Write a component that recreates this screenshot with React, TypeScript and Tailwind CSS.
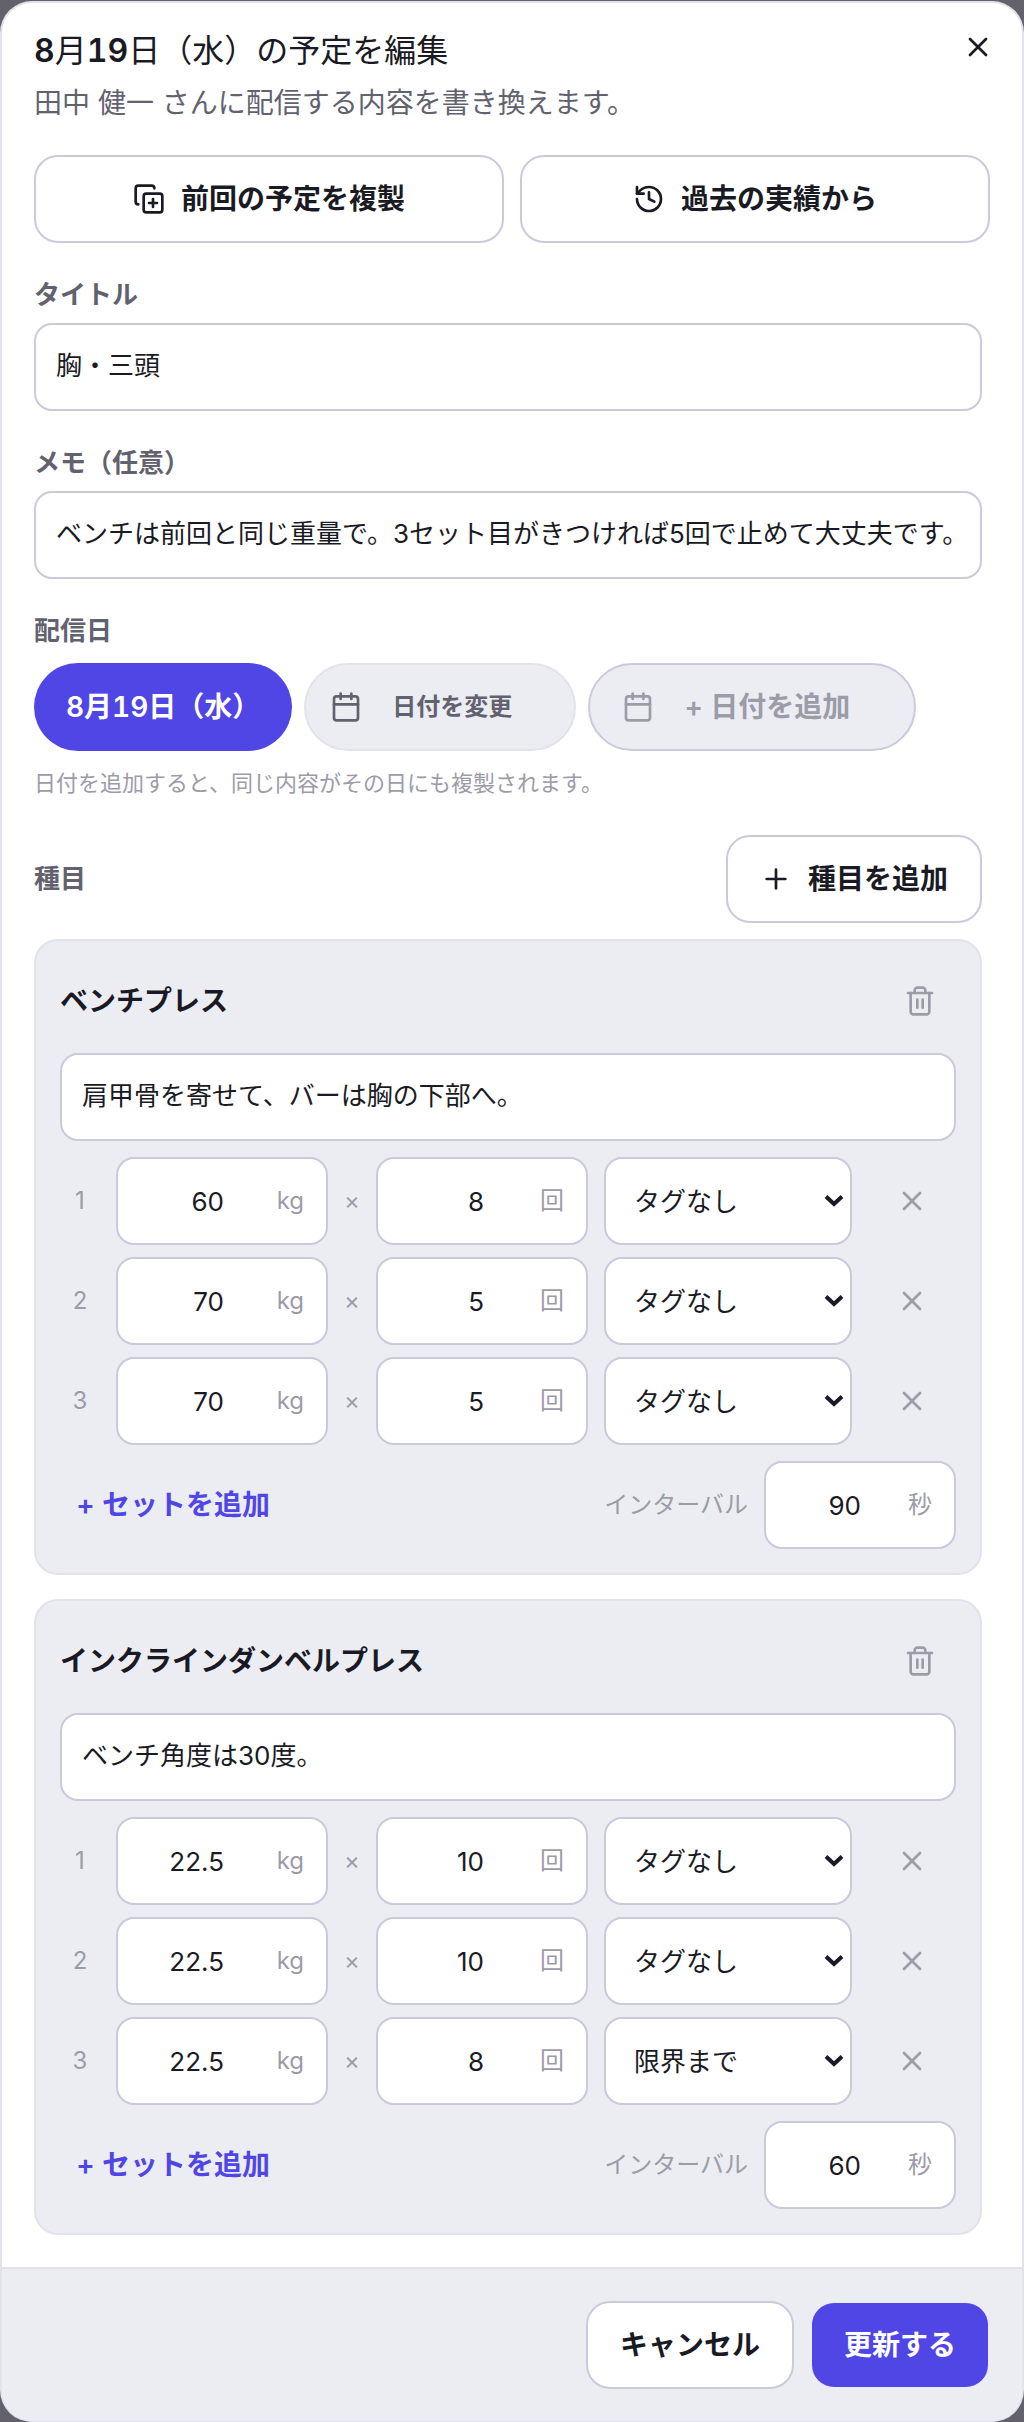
import { useId } from "react";
import { Calendar, CopyPlus, History, Plus, X } from "lucide-react";

type SetRow = { weight: string; reps: string; tag: string };

type Exercise = {
  name: string;
  note: string;
  sets: SetRow[];
  interval: string;
};

const TAGS = ["タグなし", "限界まで"];

const EXERCISES: Exercise[] = [
  {
    name: "ベンチプレス",
    note: "肩甲骨を寄せて、バーは胸の下部へ。",
    sets: [
      { weight: "60", reps: "8", tag: "タグなし" },
      { weight: "70", reps: "5", tag: "タグなし" },
      { weight: "70", reps: "5", tag: "タグなし" },
    ],
    interval: "90",
  },
  {
    name: "インクラインダンベルプレス",
    note: "ベンチ角度は30度。",
    sets: [
      { weight: "22.5", reps: "10", tag: "タグなし" },
      { weight: "22.5", reps: "10", tag: "タグなし" },
      { weight: "22.5", reps: "8", tag: "限界まで" },
    ],
    interval: "60",
  },
];

const inputClass =
  "h-22 w-full min-w-0 rounded-[18px] border-2 border-[#cbc9dc] bg-white text-[26px] text-[#1a1a24] focus:outline-none";

const outlineButton =
  "flex h-22 items-center justify-center gap-4 rounded-3xl border-2 border-[#cbc9dc] bg-white px-8 text-[28px] font-semibold whitespace-nowrap text-[#1a1a24]";

const TrashIcon = () => (
  <svg
    viewBox="0 0 24 24"
    className="size-8"
    fill="none"
    stroke="currentColor"
    strokeWidth="2"
    strokeLinecap="round"
    strokeLinejoin="round"
  >
    <path d="M3 6h18" />
    <path d="M19 6v14c0 1-1 2-2 2H7c-1 0-2-1-2-2V6" />
    <path d="M8 6V4c0-1 1-2 2-2h4c1 0 2 1 2 2v2" />
    <path d="M10 11v6" />
    <path d="M14 11v6" />
  </svg>
);

const TextField = ({ label, value }: { label: string; value: string }) => {
  const id = useId();
  return (
    <div className="flex flex-col gap-2">
      <label
        htmlFor={id}
        className="text-[26px] leading-10 font-semibold text-[#62626f]"
      >
        {label}
      </label>
      <input
        id={id}
        type="text"
        defaultValue={value}
        className={`${inputClass} px-5 pb-2`}
      />
    </div>
  );
};

const UnitInput = ({
  label,
  unit,
  value,
}: {
  label: string;
  unit: string;
  value: string;
}) => (
  <div className="relative">
    <input
      type="text"
      inputMode="decimal"
      aria-label={label}
      defaultValue={value}
      className={`${inputClass} pr-[102px] pl-5 text-right`}
    />
    <span className="pointer-events-none absolute inset-y-0 right-6 flex items-center text-2xl text-[#9c9ba8]">
      {unit}
    </span>
  </div>
);

const TagSelect = ({ value }: { value: string }) => (
  <div className="relative">
    <select
      aria-label="タグ"
      defaultValue={value}
      className={`${inputClass} appearance-none pr-12 pl-7`}
    >
      {TAGS.map((tag) => (
        <option key={tag}>{tag}</option>
      ))}
    </select>
    <span className="pointer-events-none absolute inset-y-0 right-2 flex items-center text-[#1a1a24]">
      <svg
        viewBox="0 0 20 14"
        className="h-[14px] w-5"
        fill="none"
        stroke="currentColor"
        strokeWidth="4"
      >
        <path d="M2 2.5l8 7.5 8-7.5" />
      </svg>
    </span>
  </div>
);

const ExerciseCard = ({ exercise }: { exercise: Exercise }) => {
  const intervalId = useId();
  return (
    <section className="flex flex-col gap-4 rounded-3xl border-2 border-[#e2e2eb] bg-[#ecedf3] p-6">
      <div className="flex h-18 items-center justify-between">
        <h3 className="text-[28px] font-semibold text-[#1a1a24]">
          {exercise.name}
        </h3>
        <button
          type="button"
          aria-label="種目を削除"
          className="flex size-18 items-center justify-center text-[#9c9ba8]"
        >
          <TrashIcon />
        </button>
      </div>
      <input
        type="text"
        aria-label="種目メモ"
        defaultValue={exercise.note}
        className={`${inputClass} px-5 pb-2`}
      />
      <div className="flex flex-col gap-3">
        {exercise.sets.map((set, i) => (
          <div
            key={i}
            className="grid grid-cols-[40px_1fr_16px_1fr_248px_88px] items-center gap-4"
          >
            <span className="text-center text-2xl text-[#9c9ba8]">{i + 1}</span>
            <UnitInput label="重量" unit="kg" value={set.weight} />
            <span className="text-center text-2xl text-[#9c9ba8]">×</span>
            <UnitInput label="回数" unit="回" value={set.reps} />
            <TagSelect value={set.tag} />
            <button
              type="button"
              aria-label="セットを削除"
              className="flex h-22 items-center justify-center text-[#9c9ba8]"
            >
              <X className="size-8" />
            </button>
          </div>
        ))}
      </div>
      <div className="flex items-center justify-between">
        <button
          type="button"
          className="h-22 px-4 text-[28px] font-semibold text-[#4f46e5]"
        >
          + セットを追加
        </button>
        <div className="flex items-center gap-4">
          <label htmlFor={intervalId} className="text-2xl text-[#9c9ba8]">
            インターバル
          </label>
          <div className="relative w-48">
            <input
              id={intervalId}
              type="text"
              inputMode="numeric"
              defaultValue={exercise.interval}
              className={`${inputClass} pr-[93px] pl-5 text-right`}
            />
            <span className="pointer-events-none absolute inset-y-0 right-6 flex items-center text-2xl text-[#9c9ba8]">
              秒
            </span>
          </div>
        </div>
      </div>
    </section>
  );
};

const App = () => {
  return (
    <div className="bg-[#62616c] pt-px font-['Inter','Noto_Sans_CJK_JP',sans-serif]">
      <div
        role="dialog"
        aria-labelledby="dialog-title"
        className="relative overflow-hidden rounded-4xl border-2 border-b border-[#e2e2eb] bg-white"
      >
        <button
          type="button"
          aria-label="閉じる"
          className="absolute top-7 right-7 text-[#1a1a24]"
        >
          <X className="size-8" />
        </button>

        <header className="flex flex-col gap-4 px-8 pt-8">
          <h2
            id="dialog-title"
            className="text-[32px] leading-8 text-[#1a1a24] tabular-nums"
          >
            <span className="font-semibold">8</span>月
            <span className="font-semibold">19</span>日（水）の予定を編集
          </h2>
          <p className="text-[28px] leading-10 text-[#62626f]">
            田中 健一 さんに配信する内容を書き換えます。
          </p>
        </header>

        <div className="grid grid-cols-2 gap-4 px-8 pt-8">
          <button type="button" className={outlineButton}>
            <CopyPlus className="size-8" />
            前回の予定を複製
          </button>
          <button type="button" className={outlineButton}>
            <History className="size-8" />
            過去の実績から
          </button>
        </div>

        <form className="flex flex-col gap-8 py-8 pr-10 pl-8">
          <TextField label="タイトル" value="胸・三頭" />
          <TextField
            label="メモ（任意）"
            value="ベンチは前回と同じ重量で。3セット目がきつければ5回で止めて大丈夫です。"
          />

          <div className="flex flex-col gap-3">
            <span className="text-[26px] leading-10 font-semibold text-[#62626f]">
              配信日
            </span>
            <div className="flex flex-wrap gap-3">
              <button
                type="button"
                className="h-22 rounded-full bg-[#4f46e5] px-8 text-[28px] font-semibold text-white tabular-nums"
              >
                8月19日（水）
              </button>
              <button
                type="button"
                className="flex h-22 items-center gap-[30px] rounded-full border-2 border-[#e2e2eb] bg-[#ecedf3] pr-[62px] pl-6 text-2xl font-semibold text-[#62626f]"
              >
                <Calendar className="size-8" />
                日付を変更
              </button>
              <button
                type="button"
                className="flex h-22 items-center gap-[30px] rounded-full border-2 border-[#cbc9dc] bg-[#ecedf3] pr-16 pl-8 text-[28px] font-semibold text-[#9c9ba8]"
              >
                <Calendar className="size-8" />
                + 日付を追加
              </button>
            </div>
            <p className="text-[22px] leading-10 text-[#9c9ba8]">
              日付を追加すると、同じ内容がその日にも複製されます。
            </p>
          </div>

          <div className="flex flex-col gap-4">
            <div className="flex items-center justify-between">
              <span className="text-[26px] leading-10 font-semibold text-[#62626f]">
                種目
              </span>
              <button type="button" className={outlineButton}>
                <Plus className="size-8" />
                種目を追加
              </button>
            </div>
            <div className="flex flex-col gap-6">
              {EXERCISES.map((exercise) => (
                <ExerciseCard key={exercise.name} exercise={exercise} />
              ))}
            </div>
          </div>
        </form>

        <footer className="flex justify-end gap-4 border-t-2 border-[#e2e2eb] bg-[#ecedf3] p-8">
          <button type="button" className={outlineButton}>
            キャンセル
          </button>
          <button
            type="submit"
            className="h-22 rounded-3xl border-2 border-transparent bg-[#4f46e5] bg-clip-padding px-8 text-[28px] font-semibold text-white"
          >
            更新する
          </button>
        </footer>
      </div>
    </div>
  );
};

export default App;
